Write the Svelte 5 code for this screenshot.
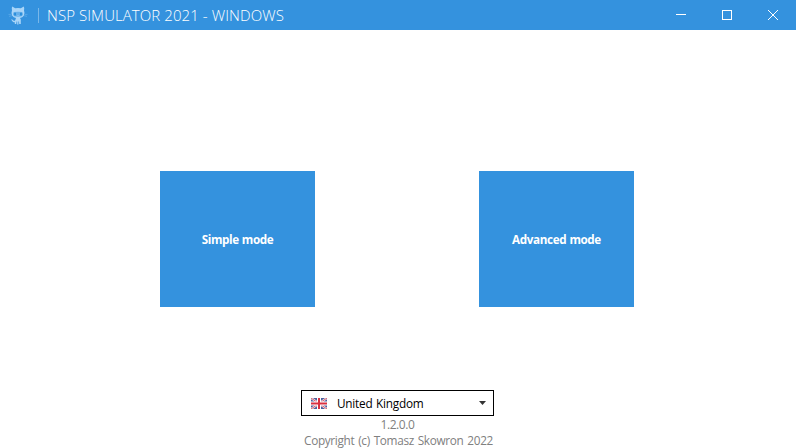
<script>
  const modes = ['Simple mode', 'Advanced mode'];
</script>

<div class="window">
  <header>
    <svg class="cat" width="20" height="20" viewBox="0 0 20 20" aria-hidden="true">
      <path fill="#a9d5f8" d="M4.2 1.5 7.2 3.2Q10 2.6 12.8 3.2L15.8 1.5Q16.6 3.3 16 5.2 17.1 8.2 15.8 10.8 14.4 12.6 12 12.9L12.8 14.5V19H11.2L11 16.5H10.4V19.4H9.2V16.5H8.6L8.2 19H6.8V17.2Q4.8 17.6 4.3 16L3 14.6Q4.8 14.2 5.6 15.7L7 15.8 8 12.9Q5.6 12.6 4.2 10.8 2.9 8.2 4 5.2 3.4 3.3 4.2 1.5Z" />
      <path fill="#65afea" d="M6.2 7Q10 6.3 13.8 7 15.2 7.5 14.9 9.4 14.5 11.6 10 11.7 5.5 11.6 5.1 9.4 4.8 7.5 6.2 7Z" />
      <path fill="#238ada" d="M6.2 7.8h1.7v2.7H6.2zM12.1 7.8h1.7v2.7h-1.7z" />
      <path fill="#a9d5f8" d="M9.5 10h1v.8h-1z" />
      <path stroke="#75b9ef" stroke-width=".5" d="M.5 9.4h3M1 11.4l3-.7M16.5 9.4h3M16 10.7l3 .7" />
    </svg>
    <span class="divider"></span>
    <h1>NSP SIMULATOR 2021 - WINDOWS</h1>
    <nav>
      <button aria-label="Minimize">
        <svg width="10" height="10" shape-rendering="crispEdges"><path d="M0 4.5h10" /></svg>
      </button>
      <button aria-label="Maximize">
        <svg width="10" height="10" shape-rendering="crispEdges"><path d="M.5.5h9v9h-9z" /></svg>
      </button>
      <button aria-label="Close">
        <svg width="10" height="10"><path d="M0 0 10 10M10 0 0 10" /></svg>
      </button>
    </nav>
  </header>

  <main>
    {#each modes as mode}
      <button class="tile">{mode}</button>
    {/each}
  </main>

  <footer>
    <button class="select">
      <svg width="16" height="11" viewBox="0 0 16 11" aria-hidden="true">
        <path fill="#4b5f9c" d="M0 0h16v11H0z" />
        <path stroke="#f2e9f0" stroke-width="2.2" d="M0 0 16 11M16 0 0 11" />
        <path stroke="#d64a58" stroke-width=".9" d="M0 0 16 11M16 0 0 11" />
        <path stroke="#fff" stroke-width="4" d="M8 0v11M0 5.5h16" />
        <path stroke="#d92f40" stroke-width="2" d="M8 0v11M0 5.5h16" />
      </svg>
      <span class="country">United Kingdom</span>
      <svg class="arrow" width="7" height="4"><path fill="#333" d="M0 0h7L3.5 4z" /></svg>
    </button>
    <p class="version">1.2.0.0</p>
    <p class="copyright">Copyright (c) Tomasz Skowron 2022</p>
  </footer>
</div>

<style>
  :global(body) { margin: 0; background: #fff; }
  .window {
    width: 796px;
    height: 448px;
    display: flex;
    flex-direction: column;
    overflow: hidden;
    font-family: "Open Sans", "Noto Sans", sans-serif;
    font-size: 12px;
  }
  button { border: 0; padding: 0; font: inherit; display: flex; align-items: center; justify-content: center; }
  svg { display: block; flex: none; }
  header { height: 30px; flex: none; display: flex; align-items: center; background: #3492de; color: #fff; }
  .cat { margin-left: 8px; }
  .divider { width: 1px; height: 15px; margin: 1px 8px 0 10px; background: #79b7e9; }
  h1 { margin: 0; font-size: 15px; line-height: 30px; font-weight: 300; white-space: nowrap; letter-spacing: 0.08px; }
  nav { display: flex; margin-left: auto; }
  nav button { width: 46px; height: 30px; background: transparent; }
  nav path { fill: none; stroke: #fff; stroke-width: 1; }
  main { display: flex; gap: 164px; margin: 141px 0 0 160px; }
  .tile { width: 155px; height: 136px; background: #3492de; color: #fff; font-size: 11.7px; font-weight: 700; white-space: nowrap; letter-spacing: -0.38px; word-spacing: 0.5px; }
  footer { margin: 83px 0 0 301px; width: 193px; }
  .select { box-sizing: border-box; width: 193px; height: 26px; border: 1px solid #000; background: #fff; color: #000; justify-content: flex-start; padding: 0 7px 0 9px; }
  .country { margin-left: 10px; font-size: 11.8px; letter-spacing: -0.24px; word-spacing: 0.8px; }
  .arrow { margin-left: auto; }
  p { margin: 0; height: 16px; line-height: 17px; color: #808080; white-space: nowrap; display: flex; justify-content: center; }
  .version { letter-spacing: -0.4px; }
  .copyright { padding-left: 2px; font-size: 11.8px; letter-spacing: -0.33px; word-spacing: 1.1px; }
</style>
